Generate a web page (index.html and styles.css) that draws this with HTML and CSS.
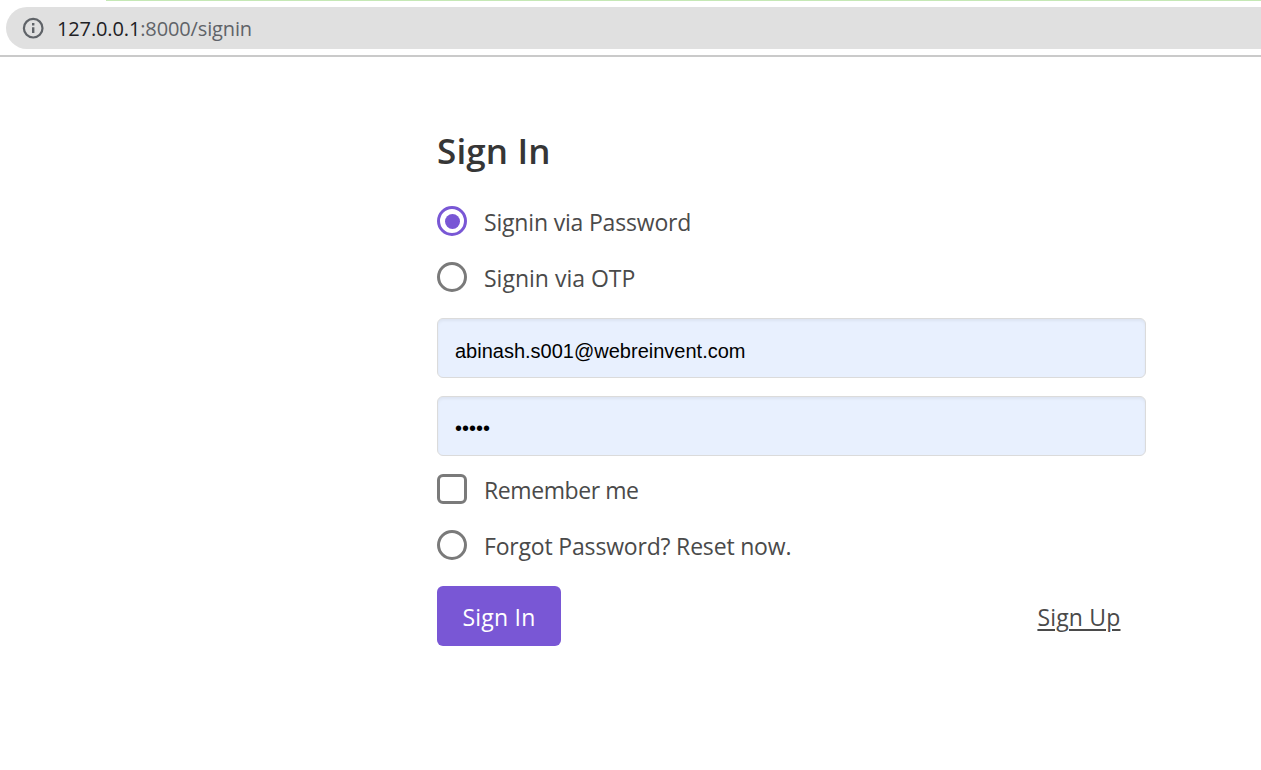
FILE: index.html
```html
<!DOCTYPE html>
<html lang="en">
<head>
<meta charset="utf-8">
<title>Sign In</title>
<link rel="stylesheet" href="styles.css">
</head>
<body>
<header class="browser">
  <div class="tab-edge"></div>
  <div class="address">
    <svg class="info" width="22" height="22" viewBox="0 0 22 22" fill="none" stroke="#5f6368" stroke-width="2.2">
      <circle cx="11.2" cy="11.2" r="9.3"/>
      <path d="M11.2 10.2V16M11.2 6V8.4" stroke-width="2.4"/>
    </svg>
    <span class="url"><span class="host">127.0.0.1</span>:8000/signin</span>
  </div>
</header>
<main class="signin">
  <h1 class="title">Sign In</h1>
  <label class="choice"><span class="mark radio checked"></span><span class="text via-password">Signin via Password</span></label>
  <label class="choice"><span class="mark radio"></span><span class="text via-otp">Signin via OTP</span></label>
  <input class="field" type="text" value="abinash.s001@webreinvent.com" spellcheck="false">
  <input class="field" type="password" value="12345">
  <label class="choice"><span class="mark box"></span><span class="text remember">Remember me</span></label>
  <label class="choice"><span class="mark radio"></span><span class="text forgot">Forgot Password? Reset now.</span></label>
  <div class="actions">
    <button class="submit" type="button">Sign In</button>
    <a class="signup" href="#">Sign Up</a>
  </div>
</main>
</body>
</html>
```
FILE: styles.css
```css
* { box-sizing: border-box; }

body {
  margin: 0;
  background: #fff;
  color: #4a4a4a;
  font-family: "Open Sans", "Noto Sans", sans-serif;
  font-size: 23px;
  overflow: hidden;
}

.browser {
  height: 57px;
  border-bottom: 2px solid #cacaca;
}

.tab-edge {
  height: 1px;
  margin: 0 0 6px 106px;
  background: #c5e8b5;
}

.address {
  display: flex;
  align-items: center;
  gap: 13px;
  height: 42px;
  margin-left: 6px;
  padding-left: 16px;
  border-radius: 21px 0 0 21px;
  background: #e0e0e0;
}

.url {
  padding-top: 2px;
  color: #5f6368;
  font-size: 20px;
  line-height: 40px;
  letter-spacing: -0.13px;
}

.host { color: #202124; }

.signin {
  display: flex;
  flex-direction: column;
  width: 709px;
  margin: 67px 0 0 437px;
}

.title {
  height: 54px;
  margin: 0 0 28px;
  color: #363636;
  font-size: 35px;
  font-weight: 600;
  line-height: 54px;
  letter-spacing: 0.15px;
}

.choice {
  display: flex;
  gap: 17px;
  height: 30px;
  margin-bottom: 26px;
  line-height: 32px;
  white-space: nowrap;
}

.via-password { letter-spacing: -0.18px; }
.remember { letter-spacing: -0.42px; }
.forgot { letter-spacing: -0.18px; }

.mark {
  flex: none;
  width: 30px;
  height: 30px;
  border: 3px solid #7a7a7a;
}

.radio { border-radius: 50%; }

.checked {
  display: grid;
  place-items: center;
  border-color: #7957d5;
}

.checked::before {
  content: "";
  width: 15px;
  height: 15px;
  border-radius: 50%;
  background: #7957d5;
}

.box { border-radius: 6px; }

.field {
  width: 100%;
  height: 60px;
  margin: 0 0 18px;
  padding: 6px 17px 0;
  border: 1px solid #dbdbdb;
  border-radius: 6px;
  outline: none;
  background: #e8f0fe;
  box-shadow: inset 0 2px 3px rgba(10, 10, 10, 0.05);
  color: #000;
  font-family: "Liberation Sans", Arial, sans-serif;
  font-size: 20px;
}

.field[type="password"] { padding: 5px 17px 0; }

.actions {
  display: flex;
  align-items: center;
  justify-content: space-between;
  height: 60px;
  padding-right: 25.5px;
}

.submit {
  width: 124px;
  height: 60px;
  padding: 2px 0 0;
  border: 0;
  border-radius: 6px;
  background: #7957d5;
  color: #fff;
  font: inherit;
  letter-spacing: 0.2px;
}

.signup {
  padding-top: 2px;
  color: #4a4a4a;
  letter-spacing: 0.18px;
  text-decoration-thickness: 2px;
  text-underline-offset: 3px;
}
```
